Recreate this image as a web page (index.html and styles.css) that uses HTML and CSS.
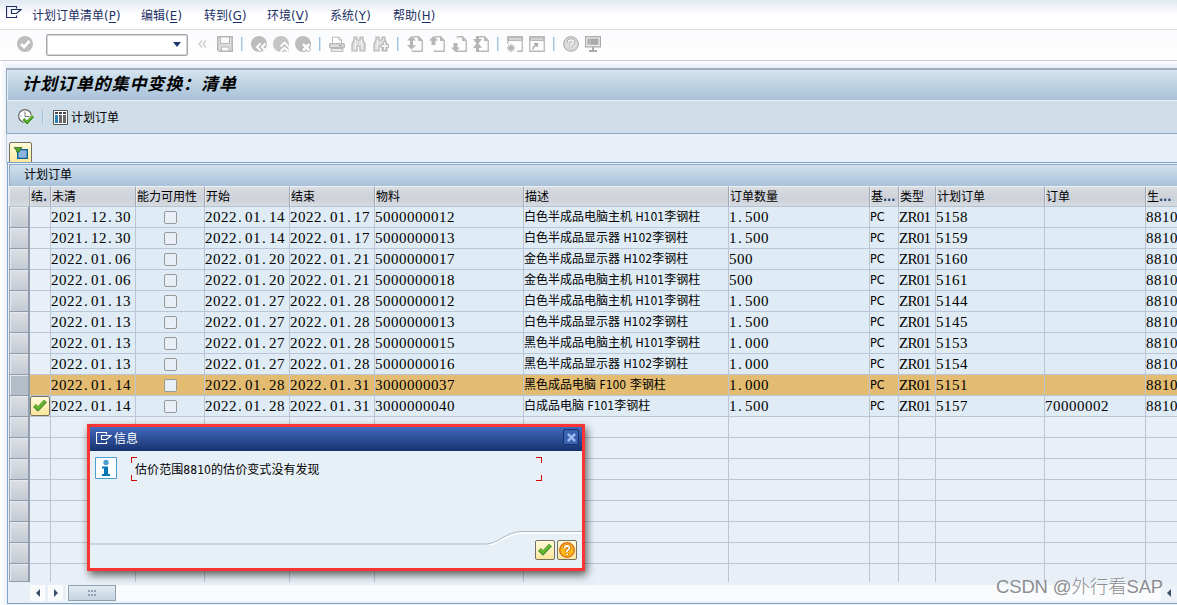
FILE: index.html
```html
<!DOCTYPE html>
<html lang="zh-CN">
<head>
    <meta charset="UTF-8">
    <meta name="viewport" content="width=device-width, initial-scale=1.0">
    <title>计划订单的集中变换：清单</title>
    <link rel="stylesheet" href="styles.css">
</head>
<body>
    <svg class="defs" width="0" height="0">
        <symbol id="window-mark" viewBox="0 0 16 12">
            <path d="M10.500 2.500V.5H.5v11h10V9.500M5.500 3.500h9.500L10.500 7.500H5.500z" fill="none" stroke="currentColor" stroke-width="1.200"/>
        </symbol>
        <symbol id="page" viewBox="0 0 16 16">
            <path d="M7 .75h4.500L15.250 4.500v10.700H5.500v-1M5.500 1h2" fill="none" stroke="#b9b9b9" stroke-width="1.400"/>
            <path d="M11 0l5 5h-5z" fill="#b9b9b9"/>
        </symbol>
        <symbol id="binoculars" viewBox="0 0 16 16">
            <path d="M3 1h3v3h3V1h3v3l2 4v7H9v-5H6v5H1V8l2-4z" fill="#ddd" stroke="#b5b5b5" stroke-width="1.200"/>
            <path d="M4.500 4v9M10.500 4v9" stroke="#f4f4f4"/>
        </symbol>
        <symbol id="check" viewBox="0 0 16 16">
            <path d="M2.500 7.500L6 11l7.500-8" fill="none" stroke="#3f8530" stroke-width="4"/>
            <path d="M2.800 7.500L6 10.500l7.200-7.500" fill="none" stroke="#68b82e" stroke-width="2.500"/>
        </symbol>
    </svg>

    <nav class="menubar">
        <svg class="menu-mark"><use href="#window-mark"/></svg>
        <ul>
            <li class="wide">计划订单清单<span>(<u>P</u>)</span></li>
            <li>编辑<span>(<u>E</u>)</span></li>
            <li>转到<span>(<u>G</u>)</span></li>
            <li>环境<span>(<u>V</u>)</span></li>
            <li>系统<span>(<u>Y</u>)</span></li>
            <li>帮助<span>(<u>H</u>)</span></li>
        </ul>
    </nav>

    <div class="toolbar">
        <svg class="icon enter" viewBox="0 0 16 16"><circle cx="8" cy="8" r="8" fill="#bdbdbd"/><path d="M4 8l3 3 5.500-6" fill="none" stroke="#fff" stroke-width="2.600"/></svg>
        <div class="command"><span class="arrow-down"></span></div>
        <svg class="back" viewBox="0 0 9 8"><path d="M4 .5L1 4l3 3.500M8 .5L5 4l3 3.500" fill="none" stroke="#ccc" stroke-width="1.300"/></svg>
        <svg class="icon" viewBox="0 0 16 16"><path d="M.75.75h14.500v14.500H2.500L.75 13.500z" fill="#ddd" stroke="#b5b5b5" stroke-width="1.500"/><path d="M3.500 1h9v6.500h-9zM4.500 11h7.500v4H4.500z" fill="#fafafa" stroke="#b5b5b5"/></svg>
        <i class="sep"></i>
        <svg class="icon" viewBox="0 0 16 16"><circle cx="8" cy="8" r="8" fill="#bdbdbd"/><path d="M9.500 7.500L6 11l3.500 3.500M14.500 7.500L11 11l3.500 3.500" fill="none" stroke="#fff" stroke-width="2"/></svg>
        <svg class="icon" viewBox="0 0 16 16"><circle cx="8" cy="8" r="8" fill="#c6c6c6"/><path d="M7.500 10.500l4-4 4 4M7.500 15.500l4-4 4 4" fill="none" stroke="#b5b5b5" stroke-width="3.600"/><path d="M7.500 10.500l4-4 4 4M7.500 15.500l4-4 4 4" fill="none" stroke="#fff" stroke-width="2.200"/></svg>
        <svg class="icon" viewBox="0 0 16 16"><circle cx="8" cy="8" r="8" fill="#bdbdbd"/><path d="M7.500 7.500l7.500 7.500m0-7.500l-7.500 7.500" stroke="#b5b5b5" stroke-width="4.200"/><path d="M8 8l6.500 6.500m0-6.500l-6.500 6.500" stroke="#fff" stroke-width="2.600"/></svg>
        <i class="sep"></i>
        <svg class="icon" viewBox="0 0 16 16"><path d="M3.500 7V1.200h6.500L12.500 4v3" fill="#fff" stroke="#bbb"/><path d="M10 1v3h3" fill="none" stroke="#bbb"/><rect x=".6" y="7.600" width="14.800" height="4" rx="1" fill="#ddd" stroke="#b5b5b5" stroke-width="1.200"/><path d="M2 12.500h12v2.800H2z" fill="#eee" stroke="#b5b5b5"/><path d="M10 9.600h3" stroke="#999"/></svg>
        <svg class="icon"><use href="#binoculars"/></svg>
        <svg class="icon" viewBox="0 0 16 16"><use href="#binoculars"/><path d="M10.500 5.500h2.500v3h2.500v3H13v3h-2.500v-3H8v-3h2.500z" fill="#f4f4f4" stroke="#b5b5b5"/></svg>
        <i class="sep"></i>
        <svg class="icon" viewBox="0 0 16 16"><use href="#page"/><path d="M4.500 0L9 4.500H6V9h3l-4.500 4.500L0 9h3V4.500H0z" fill="#b5b5b5"/></svg>
        <svg class="icon" viewBox="0 0 16 16"><use href="#page"/><path d="M4.500 0L9 4.500H6.500V9h-4V4.500H0z" fill="#b5b5b5"/></svg>
        <svg class="icon" viewBox="0 0 16 16"><use href="#page"/><path d="M4.500 16L0 11.500h2.500V7h4v4.500H9z" fill="#b5b5b5"/></svg>
        <svg class="icon" viewBox="0 0 16 16"><use href="#page"/><path d="M3 0h3v3h3L5.500 7.500 9 12H6v4H3v-4H0l3.500-4.500L0 3h3z" fill="#b5b5b5"/></svg>
        <i class="sep"></i>
        <svg class="icon" viewBox="0 0 16 16"><path d="M.75 8V.75h14.500v14.500H10" fill="none" stroke="#b9b9b9" stroke-width="1.300"/><path d="M0 1h16v4H0z" fill="#b9b9b9"/><path d="M2 3h12" stroke="#eee"/><path d="M4 8v8M0 12h8M1.200 9.200l5.600 5.600m0-5.600l-5.600 5.600" stroke="#b5b5b5" stroke-width="1.300"/></svg>
        <svg class="icon" viewBox="0 0 16 16"><path d="M.75.75h14.500v14.500H.75z" fill="none" stroke="#b9b9b9" stroke-width="1.300"/><path d="M0 1h16v4H0z" fill="#b9b9b9"/><path d="M2 3h12" stroke="#eee"/><path d="M4 13.500q-.5-3 3.500-4.500M5 7.800h3.200V11" fill="none" stroke="#aaa" stroke-width="1.500"/></svg>
        <i class="sep"></i>
        <svg class="icon" viewBox="0 0 16 16"><circle cx="8" cy="8" r="7.300" fill="#ddd" stroke="#b5b5b5" stroke-width="1.300"/><path d="M5.300 6.500Q5.500 3.800 8 3.800t2.700 2.200Q10.700 7.500 8 9v1.200M8 11.300v2" fill="none" stroke="#aaa" stroke-width="3"/><path d="M5.500 6.200Q5.700 4 8 4t2.500 2Q10.500 7.300 8 8.800V10M8 11.500v1.500" fill="none" stroke="#fff" stroke-width="1.600"/></svg>
        <svg class="icon" viewBox="0 0 16 16"><path d="M.6.6h14.800v10.200H.6z" fill="#eee" stroke="#aaa" stroke-width="1.200"/><path d="M2.500 2.500h11v6.300h-11z" fill="#aaa"/><path d="M5 2.500v6.300" stroke="#c8c8c8"/><path d="M8 11v3M4 15h8" stroke="#aaa" stroke-width="2"/></svg>
    </div>

    <div class="screen">
        <header class="screen-head">
            <h1>计划订单的集中变换：清单</h1>
            <div class="app-toolbar">
                <svg class="icon execute" viewBox="0 0 16 16"><circle cx="7" cy="7" r="6.400" fill="#fff" stroke="#666" stroke-width="1.200"/><path d="M7 2.500v5h4.500M7 10v1.500M2.500 7h1" fill="none" stroke="#777"/><path d="M5.500 10l3.500 3.500L15 7" fill="none" stroke="#fff" stroke-width="4"/><path d="M5.500 10l3.500 3.500L15 7" fill="none" stroke="#2f8a20" stroke-width="3"/><path d="M6 10l3 3 5.500-6" fill="none" stroke="#72bf36" stroke-width="1.200"/></svg>
                <i class="sep"></i>
                <svg class="columns" viewBox="0 0 15 15"><path d="M.5.5h14v14H.5z" fill="#fff" stroke="#555"/><path d="M2 3h3M6 3h3M10 3h3" stroke="#444" stroke-width="2"/><path d="M3.500 5v8" stroke="#2583b8" stroke-width="3"/><path d="M7.500 5v8M11.500 5v8" stroke="#666" stroke-width="3"/></svg>
                <span>计划订单</span>
            </div>
        </header>

        <div class="filter-row">
            <button class="sap-btn filter-btn">
                <svg viewBox="0 0 14 12"><path d="M3.700 2.700h9.600v8.600H3.700z" fill="#8fb4df" stroke="#075e94" stroke-width="1.300"/><path d="M0 .5h8L5.500 3.500V5h-3V3.500z" fill="#58a52d" stroke="#28701c" stroke-width=".8"/></svg>
            </button>
        </div>

        <section class="grid">
            <h2>计划订单</h2>
            <table>
                <colgroup id="cols"></colgroup>
                <thead>
                    <tr>
                        <th></th><th>结<b>.</b></th><th>未清</th><th>能力可用性</th><th>开始</th><th>结束</th><th>物料</th>
                        <th>描述</th><th>订单数量</th><th>基<b>...</b></th><th>类型</th><th>计划订单</th><th>订单</th><th>生<b>...</b></th>
                    </tr>
                </thead>
                <tbody id="rows"></tbody>
            </table>
            <div class="scrollbar">
                <span class="scroll-btn"><i class="tri-left"></i></span>
                <span class="scroll-btn"><i class="tri-right"></i></span>
                <span class="thumb"><i></i></span>
                <span class="scroll-btn end"><i class="tri-left"></i></span>
            </div>
        </section>
    </div>

    <div class="dialog">
        <div class="dialog-title">
            <svg class="dialog-mark"><use href="#window-mark"/></svg>
            <span>信息</span>
            <button class="close"><svg viewBox="0 0 10 10"><path d="M1 1l8 8m0-8L1 9" stroke="#9dbcf5" stroke-width="2.800"/></svg></button>
        </div>
        <div class="dialog-body">
            <svg class="info" viewBox="0 0 22 22"><path d="M.5.5h21v21H.5z" fill="#fff" stroke="#4b9fd0"/><circle cx="11" cy="5.500" r="2.700" fill="#4b9fd0"/><path d="M7 9.500h6v7.500h2v2H7v-2h2v-5.500H7z" fill="#0877b8"/></svg>
            <div class="message">估价范围8810的估价变式没有发现</div>
        </div>
        <div class="dialog-foot">
            <svg class="curve" viewBox="0 0 492 14"><path d="M0 13.500h396c12 0 20-12.500 36-12.500h60" fill="none" stroke="#fff" stroke-width="1.500" transform="translate(0 1)"/><path d="M0 13h396c12 0 20-12.500 36-12.500h60" fill="none" stroke="#aab8c8"/></svg>
            <div class="dialog-actions">
                <button class="sap-btn"><svg viewBox="0 0 16 16"><use href="#check"/></svg></button>
                <button class="sap-btn"><svg viewBox="0 0 16 16"><circle cx="8" cy="8" r="7.300" fill="#ffba18" stroke="#d86a18" stroke-width="1.300"/><path d="M5.300 6.300Q5.500 4 8 4t2.500 2Q10.500 7.300 8 8.800V10M8 11.300v2" fill="none" stroke="#c26000" stroke-width="3.200"/><path d="M5.500 6.300Q5.700 4 8 4t2.500 2Q10.500 7.300 8 8.800V10M8 11.500v1.500" fill="none" stroke="#fff" stroke-width="1.800"/></svg></button>
            </div>
        </div>
    </div>

    <div class="watermark">CSDN @外行看SAP</div>

    <script src="script.js"></script>
</body>
</html>
```
FILE: styles.css
```css
* {
    box-sizing: border-box;
}
body {
    margin: 0;
    width: 1177px;
    height: 605px;
    overflow: hidden;
    position: relative;
    background: #f4f7fb;
    color: #000;
    font: 12px/16px "DejaVu Sans Condensed", "Noto Sans CJK SC", sans-serif;
}
.defs {
    position: absolute;
}
h1, h2, ul {
    margin: 0;
    padding: 0;
}
button {
    padding: 0;
    margin: 0;
}
svg {
    display: block;
    flex: none;
}

/* menu */
.menubar {
    display: flex;
    height: 30px;
    padding-left: 6px;
    border-bottom: 1px solid #dcdcdf;
    background: linear-gradient(#dfe8f0, #fff 14px);
    color: #1c2f66;
}
.menu-mark {
    width: 16px;
    height: 12px;
    margin: 6px 10px 0 0;
}
.menubar ul {
    display: flex;
    list-style: none;
    padding-top: 8px;
}
.menubar li {
    width: 63px;
    white-space: nowrap;
}
.menubar span {
    font-size: 13px;
    letter-spacing: .2px;
}
.menubar .wide {
    width: 109px;
}
.menubar u {
    text-underline-offset: 2px;
}

/* standard toolbar */
.toolbar {
    display: flex;
    align-items: center;
    gap: 6px;
    height: 31px;
    padding: 0 0 2px 17px;
    border-bottom: 1px solid #c9cadb;
    background: linear-gradient(#fafbfd, #fff);
}
.icon {
    width: 16px;
    height: 16px;
}
.command {
    display: flex;
    align-items: center;
    justify-content: flex-end;
    width: 142px;
    height: 22px;
    margin: 1px 4px 0 7px;
    padding-right: 6px;
    border: 1px solid #a3a6aa;
    box-shadow: inset 0 0 0 1px #d5d5d5;
    border-radius: 2px;
    background: #fff;
}
.arrow-down {
    border: 4.5px solid transparent;
    border-top: 5px solid #1c3a6d;
    border-bottom: 0;
}
.back {
    width: 9px;
    height: 8px;
    margin-right: 4px;
}
.sep {
    width: 6px;
    height: 14px;
    background: linear-gradient(90deg, transparent 2px, #9ec2de 2px, #9ec2de 3px, #d5e5f1 3px, #d5e5f1 4px, transparent 4px);
}

/* screen area */
.screen {
    height: 544px;
    padding: 7px 0 0 6px;
    background: linear-gradient(90deg, #fff, #eef3f9 6px, transparent 6px), linear-gradient(#fbfcfe, #e7edf5 7px, #e8eff7 8px);
}
.screen-head {
    height: 66px;
    border: 1px solid #8fa9c4;
    border-right: 0;
    border-top: 2px solid #a2abbd;
    background: #cedde8;
}
h1 {
    height: 31px;
    padding-left: 14px;
    border-bottom: 1px solid #eaf2f8;
    border-left: 1px solid #e6eff6;
    background: linear-gradient(#d5e5f0, #bbd0e0 55%, #aac1dc);
    font: italic bold 17px/25px "Noto Sans CJK SC", sans-serif;
    letter-spacing: .9px;
}
.app-toolbar {
    display: flex;
    align-items: center;
    height: 32px;
    padding-left: 11px;
}
.app-toolbar .sep {
    margin: 0 7px 0 6px;
}
.app-toolbar span {
    padding-top: 1px;
}
.columns {
    width: 15px;
    height: 15px;
    margin-right: 3px;
}
.filter-row {
    height: 29px;
    padding: 8px 0 0 3px;
    border-left: 1px solid #c3d0de;
    margin-bottom: -1px;
}
.sap-btn {
    display: flex;
    align-items: center;
    justify-content: center;
    width: 20px;
    height: 20px;
    border: 1px solid #77715f;
    border-radius: 2px;
    background: linear-gradient(#fffbdc, #fbe69b);
}
.sap-btn svg {
    width: 16px;
    height: 16px;
}
.filter-row .sap-btn {
    width: 23px;
    height: 22px;
    margin-left: -1px;
}
.filter-btn svg {
    width: 14px;
    height: 12px;
}

/* order list */
.grid {
    height: 442px;
    margin-left: 1px;
    padding-left: 1px;
    border: 1px solid #7ea5c6;
    border-right: 0;
    background: #e8eff6;
    overflow: hidden;
}
h2 {
    height: 22px;
    margin: 1px 0 0;
    padding: 1px 0 0 14px;
    border-top: 1px solid #8fabc9;
    border-left: 1px solid #8fabc9;
    background: linear-gradient(#d0e0ec, #a9c2da);
    font-size: 12px;
    font-weight: normal;
    line-height: 18px;
}
table {
    table-layout: fixed;
    width: 1185px;
    border-spacing: 0;
}
th {
    height: 21px;
    padding: 1px 0 0 1px;
    border-right: 1px solid #9fa9b8;
    border-bottom: 1px solid #b5c2d0;
    border-top: 1px solid #eef1f4;
    background: linear-gradient(#d9dce0, #cdd1d9 60%, #d6dbe1);
    box-shadow: inset 1px 0 #e6e9ed;
    font-weight: normal;
    text-align: left;
    white-space: nowrap;
    overflow: hidden;
    line-height: 18px;
}
th b {
    color: #17406e;
}
td {
    height: 21px;
    padding: 0;
    border-right: 1px solid #bbc5d5;
    border-bottom: 1px solid #bbc5d5;
    white-space: nowrap;
    overflow: hidden;
    line-height: 20px;
}
.filled td {
    background: #dfebf5;
}
.filled td.state {
    background: #e8eff6;
}
.selected td, .selected td.state {
    background: #e3bc72;
}
td.handle, .filled td.handle {
    border-right: 2px solid #919fb1;
    border-bottom: 1px solid #8e9bad;
    border-left: 1px solid #9ba7b5;
    background: linear-gradient(#dce0e5, #c5cad3);
    box-shadow: inset 1px 1px #e6e9ed;
}
.selected td.handle {
    background: #b4bdc8;
}
tr:last-child td {
    height: 18px;
    border-bottom: 0;
}
tr:last-child td.handle {
    border-bottom: 1px solid #8e9bad;
}
.latin {
    font-size: 12.5px;
}
.num {
    font: 15px/18px "Liberation Serif", serif;
    letter-spacing: .5px;
}
.num i {
    display: inline-block;
    width: 8px;
    padding-left: 1px;
    font-style: normal;
}
.type {
    letter-spacing: -.7px;
}
.box {
    display: block;
    width: 13px;
    height: 13px;
    margin: 1px 0 0 28px;
    border: 1px solid #989898;
    border-radius: 2px;
    background: #e8eff6;
}
.scrollbar {
    display: flex;
    align-items: center;
    height: 16px;
    margin: 3px 0 0 21px;
    background: #fafbfc;
}
.scroll-btn {
    display: flex;
    align-items: center;
    justify-content: center;
    width: 18px;
    height: 16px;
    border-right: 3px solid #e8eff6;
}
.tri-left, .tri-right {
    border: 4px solid transparent;
}
.tri-left {
    border-right: 4px solid #3a506a;
    border-left: 0;
}
.tri-right {
    border-left: 4px solid #3a506a;
    border-right: 0;
}
.thumb {
    display: flex;
    align-items: center;
    justify-content: center;
    width: 48px;
    height: 16px;
    margin-left: 2px;
    border: 1px solid #8fa2b4;
    background: linear-gradient(#e3ebf2, #c5d4e0);
}
.thumb i {
    width: 8px;
    height: 6px;
    background: repeating-linear-gradient(90deg, #8fa2b4 0 2px, transparent 2px 3px);
    clip-path: polygon(0 0, 100% 0, 100% 33%, 0 33%, 0 66%, 100% 66%, 100% 100%, 0 100%);
}
.scroll-btn.end {
    width: 16px;
    margin-left: auto;
    border-right: 0;
    background: #edf2f8;
}

/* message dialog */
.dialog {
    position: absolute;
    left: 87px;
    top: 424px;
    width: 498px;
    height: 147px;
    display: flex;
    flex-direction: column;
    border: 3px solid #fc3434;
    background: #e8f0f7;
    box-shadow: 2px 4px 8px rgba(0, 0, 0, .6);
}
.dialog-title {
    display: flex;
    align-items: center;
    height: 24px;
    padding: 0 3px 0 6px;
    background: linear-gradient(#4169bd, #17336f);
    color: #fff;
}
.dialog-mark {
    width: 16px;
    height: 12px;
    margin: -2px 2px 0 0;
}
.close {
    display: flex;
    align-items: center;
    justify-content: center;
    width: 16px;
    height: 16px;
    margin: -4px 0 0 auto;
    border: 1px solid #15316f;
    border-radius: 2px;
    background: #3961b0;
}
.close svg {
    width: 9px;
    height: 9px;
}
.dialog-body {
    display: flex;
    padding: 6px 0 0 5px;
}
.info {
    width: 22px;
    height: 22px;
}
.message {
    width: 411px;
    height: 24px;
    margin-left: 14px;
    padding-left: 4px;
    line-height: 27px;
    letter-spacing: .07px;
    /* four red corner marks */
    background:
        linear-gradient(#d40000, #d40000) 0 0 / 6px 1px,
        linear-gradient(#d40000, #d40000) 0 0 / 1px 6px,
        linear-gradient(#d40000, #d40000) 0 100% / 6px 1px,
        linear-gradient(#d40000, #d40000) 0 100% / 1px 6px,
        linear-gradient(#d40000, #d40000) 100% 0 / 6px 1px,
        linear-gradient(#d40000, #d40000) 100% 0 / 1px 6px,
        linear-gradient(#d40000, #d40000) 100% 100% / 6px 1px,
        linear-gradient(#d40000, #d40000) 100% 100% / 1px 6px;
    background-repeat: no-repeat;
}
.dialog-foot {
    margin-top: auto;
    height: 37px;
}
.curve {
    width: 492px;
    height: 14px;
}
.dialog-actions {
    display: flex;
    justify-content: flex-end;
    gap: 2px;
    margin-top: -5px;
    padding-right: 5px;
}

.watermark {
    position: absolute;
    left: 996px;
    top: 574px;
    color: #8b8d91;
    font: 300 18.5px/26px "Liberation Sans", "Noto Sans CJK SC", sans-serif;
    letter-spacing: -.15px;
    text-shadow: 1px 1px #fff;
    white-space: nowrap;
}
```
FILE: script.js
```js
const widths = [21, 21, 85, 69, 85, 85, 149, 205, 141, 29, 37, 109, 101, 48];

// open date, start, end, material, description, quantity, planned order, order
const orders = [
    ['2021.12.30', '2022.01.14', '2022.01.17', '5000000012', '白色半成品电脑主机 H101李钢柱', '1.500', '5158', ''],
    ['2021.12.30', '2022.01.14', '2022.01.17', '5000000013', '白色半成品显示器 H102李钢柱', '1.500', '5159', ''],
    ['2022.01.06', '2022.01.20', '2022.01.21', '5000000017', '金色半成品显示器 H102李钢柱', '500', '5160', ''],
    ['2022.01.06', '2022.01.20', '2022.01.21', '5000000018', '金色半成品电脑主机 H101李钢柱', '500', '5161', ''],
    ['2022.01.13', '2022.01.27', '2022.01.28', '5000000012', '白色半成品电脑主机 H101李钢柱', '1.500', '5144', ''],
    ['2022.01.13', '2022.01.27', '2022.01.28', '5000000013', '白色半成品显示器 H102李钢柱', '1.500', '5145', ''],
    ['2022.01.13', '2022.01.27', '2022.01.28', '5000000015', '黑色半成品电脑主机 H101李钢柱', '1.000', '5153', ''],
    ['2022.01.13', '2022.01.27', '2022.01.28', '5000000016', '黑色半成品显示器 H102李钢柱', '1.000', '5154', ''],
    ['2022.01.14', '2022.01.28', '2022.01.31', '3000000037', '黑色成品电脑 F100 李钢柱', '1.000', '5151', ''],
    ['2022.01.14', '2022.01.28', '2022.01.31', '3000000040', '白成品电脑 F101李钢柱', '1.500', '5157', '70000002']
];
const selected = 8;
const finished = 9;
const emptyRows = 8;

// the dot takes a full character cell
function num(text) {
    return `<td class="num">${text.replace(/\./g, '<i>.</i>')}</td>`;
}

document.getElementById('cols').innerHTML = widths.map(w => `<col style="width:${w}px">`).join('');

let html = '';
orders.forEach((o, i) => {
    const state = i === finished ? '<span class="sap-btn"><svg viewBox="0 0 16 16"><use href="#check"/></svg></span>' : '';
    html += `<tr class="filled${i === selected ? ' selected' : ''}"><td class="handle"></td><td class="state">${state}</td>`
        + num(o[0]) + '<td><span class="box"></span></td>' + num(o[1]) + num(o[2]) + num(o[3])
        + `<td>${o[4]}</td>` + num(o[5]) + '<td class="latin">PC</td><td class="num type">ZR01</td>'
        + num(o[6]) + num(o[7]) + num('8810') + '</tr>';
});
for (let i = 0; i < emptyRows; i++) {
    html += '<tr><td class="handle"></td>' + '<td></td>'.repeat(widths.length - 1) + '</tr>';
}
document.getElementById('rows').innerHTML = html;
```
